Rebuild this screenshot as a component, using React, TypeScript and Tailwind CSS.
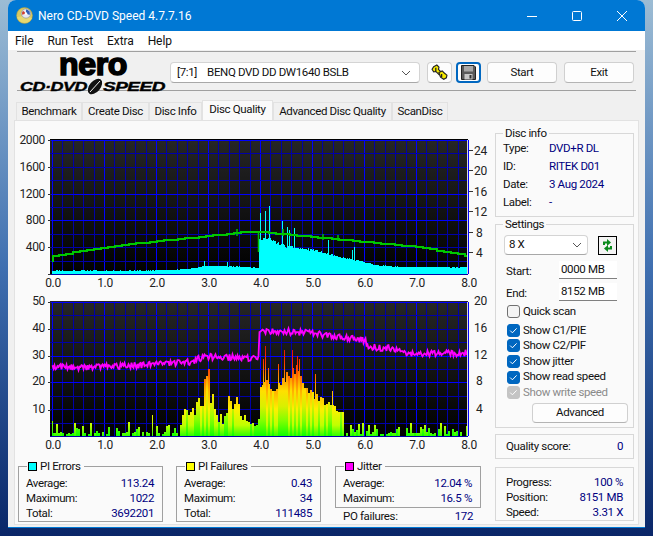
import type { ReactNode } from 'react';

const rng = (seed: number) => () => {
  seed = (seed * 1664525 + 1013904223) % 4294967296;
  return seed / 4294967296;
};

const interp = (pts: number[][], x: number) => {
  if (x <= pts[0][0]) return pts[0][1];
  for (let i = 1; i < pts.length; i++) {
    if (x <= pts[i][0]) {
      const [x0, y0] = pts[i - 1];
      const [x1, y1] = pts[i];
      return y0 + ((y1 - y0) * (x - x0)) / (x1 - x0);
    }
  }
  return pts[pts.length - 1][1];
};

const X0 = 52;
const X1 = 467;
const xAt = (v: number) => X0 + v * 52;

// chart 1 data (screen pixels)
const cyanEnv = [[52, 3.4], [150, 3.4], [180, 4.5], [195, 6], [205, 8], [240, 7.5], [258, 6], [259, 36], [264, 35], [270, 34], [286, 27], [312, 24], [338, 17], [364, 12], [374, 9], [400, 7], [467, 6.5]];
const cyanSpikes: Record<number, number> = { 204: 13, 227: 12, 260: 61, 265: 63, 269: 68, 282: 53, 287: 47, 289: 44, 294: 46, 328: 34, 352: 24, 354: 27 };
const greenEnv = [[52, 256], [104, 247], [156, 241], [208, 236], [245, 232], [260, 232], [312, 237], [364, 242], [416, 247], [467, 256]];

function cyanPath() {
  const r = rng(11);
  let d = '';
  for (let x = X0; x <= X1; x++) {
    const h = cyanSpikes[x] ?? Math.round(interp(cyanEnv, x) * (0.96 + 0.1 * r()));
    d += `M${x + 0.5} 274V${274 - h}`;
  }
  return d;
}

function greenPath() {
  let d = `M${X0 + 0.5} 262V256`;
  for (let x = X0; x <= X1; x += 7) {
    const y = Math.round(interp(greenEnv, x));
    d += `H${x}V${y}`;
  }
  return d + `H${X1}`;
}

// chart 2 data
const magentaEnv = [[52, 367], [104, 367], [156, 364], [192, 362], [200, 358], [208, 357], [245, 358], [258, 358], [259, 332], [270, 331], [312, 333], [338, 337], [364, 340], [369, 347], [400, 349], [403, 354], [467, 353]];
const midEnv = [[179, 8], [182, 23], [185, 37], [190, 25], [197, 50], [203, 60], [205, 75], [209, 69], [214, 39], [218, 25], [224, 22], [228, 47], [233, 47], [237, 37], [243, 29], [248, 19], [258, 20]];
const highEnv = [[260, 59], [265, 62], [272, 52], [278, 55], [284, 62], [290, 68], [296, 72], [302, 55], [310, 48], [320, 40], [330, 35], [340, 28], [343, 26]];
const barSpikes: Record<number, number> = { 52: 15, 152: 21, 263: 77, 265: 90, 268: 68, 278: 72, 284: 86, 292: 86, 297: 80, 299: 77, 315: 62, 332: 45 };

function magentaPath() {
  const r = rng(5);
  let d = '';
  for (let x = X0; x <= X1; x++) {
    const y = interp(magentaEnv, x) + (r() - 0.5) * 6.5;
    d += `${d ? 'L' : 'M'}${x + 0.5} ${y.toFixed(1)}`;
  }
  return d;
}

// bars come in pairs of pixels; tall ones are split over two heat ramps
function barsPaths() {
  const r = rng(23);
  let a1 = '';
  let a2 = '';
  for (let x = X0; x <= X1; x += 2) {
    let h = 0;
    const a = r();
    const b = r();
    if (x >= 260 && x <= 343) h = interp(highEnv, x) * (0.82 + 0.18 * a);
    else if (x >= 179 && x < 260) h = interp(midEnv, x) * (0.5 + 0.5 * a);
    else if (a < 0.2) h = 0;
    else if (a < 0.6) h = 2 + b * 2;
    else h = 4 + b * 10;
    h = Math.round(h);
    const alt = b > 0.5;
    for (const px of [x, x + 1]) {
      const hh = barSpikes[px] ?? h;
      if (hh <= 0) continue;
      const seg = `M${px + 0.5} 436V${436 - hh}`;
      if (alt) a2 += seg;
      else a1 += seg;
    }
  }
  return [a1, a2];
}

const hLines = (top: number) => [0, 1, 2, 3, 4, 5, 6, 7, 8, 9, 10].map((i) => ({ y: top + i * 13.4, major: i === 0 || i === 4 || i === 6 }));
const vLines = Array.from({ length: 41 }, (_, i) => ({ x: X0 + i * 10.4, major: i % 5 === 0 }));

function Grid({ top }: { top: number }) {
  return (
    <g shapeRendering="crispEdges" strokeWidth={1}>
      {vLines.map((l) => (
        <line key={l.x} x1={Math.round(l.x) + 0.5} x2={Math.round(l.x) + 0.5} y1={top} y2={top + 134} stroke={l.major ? '#0000ff' : '#0000a8'} />
      ))}
      {hLines(top).map((l) => (
        <line key={l.y} x1={50} x2={468} y1={Math.round(l.y) + 0.5} y2={Math.round(l.y) + 0.5} stroke={l.major ? '#0000ff' : '#0000a8'} />
      ))}
    </g>
  );
}

function AxisText({ x, y, anchor, children }: { x: number; y: number; anchor: 'start' | 'middle' | 'end'; children: ReactNode }) {
  return (
    <text x={x} y={y + 4.5} textAnchor={anchor} fontSize={12} fill="#222">
      {children}
    </text>
  );
}

const xLabels = ['0.0', '1.0', '2.0', '3.0', '4.0', '5.0', '6.0', '7.0', '8.0'];

function ChartOne() {
  return (
    <svg width={476} height={162} viewBox="15 130 476 162" className="block">
      <defs>
        <linearGradient id="bg1" x1="0" y1="0" x2="0" y2="1">
          <stop offset="0" stopColor="#262626" />
          <stop offset="1" stopColor="#000" />
        </linearGradient>
      </defs>
      <rect x={50} y={139} width={418} height={136} fill="url(#bg1)" />
      <rect x={50} y={139} width={418} height={1} fill="#000" />
      <Grid top={140} />
      <path d={cyanPath()} stroke="#00ffff" shapeRendering="crispEdges" fill="none" />
      <path d={greenPath()} stroke="#00c800" strokeWidth={2} shapeRendering="crispEdges" fill="none" />
      <path d="M258.5 232V252M237 229V236M283 229V236M323 234V240M338 235V241" stroke="#00c000" strokeWidth={1.5} fill="none" />
      <rect x={467} y={140} width={1} height={134} fill="#d8d8d8" />
      {[['2000', 139], ['1600', 166], ['1200', 193], ['800', 219], ['400', 246]].map(([t, y]) => (
        <g key={t}>
          <AxisText x={45} y={+y} anchor="end">{t}</AxisText>
          <line x1={48} x2={51} y1={+y + 1.5} y2={+y + 1.5} stroke="#333" />
        </g>
      ))}
      <line x1={48} x2={51} y1={274.5} y2={274.5} stroke="#333" />
      {[['24', 150], ['20', 170], ['16', 191], ['12', 211], ['8', 232], ['4', 252]].map(([t, y]) => (
        <g key={t}>
          <text x={t === '8' || t === '4' ? 476 : 474} y={+y + 4.5} fontSize={12} fill="#222">{t}</text>
          <line x1={469} x2={473} y1={+y + 0.5} y2={+y + 0.5} stroke="#333" />
        </g>
      ))}
      {xLabels.map((t, i) => (
        <AxisText key={t} x={xAt(i) + 1} y={282} anchor="middle">{t}</AxisText>
      ))}
    </svg>
  );
}

function ChartTwo() {
  const [a1, a2] = barsPaths();
  return (
    <svg width={476} height={163} viewBox="15 292 476 163" className="block">
      <defs>
        <linearGradient id="bg2" x1="0" y1="0" x2="0" y2="1">
          <stop offset="0" stopColor="#262626" />
          <stop offset="1" stopColor="#000" />
        </linearGradient>
        <linearGradient id="heat" gradientUnits="userSpaceOnUse" x1="0" y1="436" x2="0" y2="346">
          <stop offset="0" stopColor="#10ff00" />
          <stop offset="0.17" stopColor="#80ff00" />
          <stop offset="0.33" stopColor="#d8f000" />
          <stop offset="0.5" stopColor="#ffe000" />
          <stop offset="0.64" stopColor="#ff9a00" />
          <stop offset="0.83" stopColor="#ff3000" />
          <stop offset="1" stopColor="#e01000" />
        </linearGradient>
        <linearGradient id="heat2" gradientUnits="userSpaceOnUse" x1="0" y1="436" x2="0" y2="346">
          <stop offset="0" stopColor="#30ff00" />
          <stop offset="0.12" stopColor="#c0ff00" />
          <stop offset="0.3" stopColor="#fff000" />
          <stop offset="0.5" stopColor="#ffb000" />
          <stop offset="0.64" stopColor="#ff7000" />
          <stop offset="0.83" stopColor="#ff2000" />
          <stop offset="1" stopColor="#d01000" />
        </linearGradient>
      </defs>
      <rect x={50} y={301} width={418} height={136} fill="url(#bg2)" />
      <Grid top={302} />
      <path d={a1} stroke="url(#heat)" shapeRendering="crispEdges" fill="none" />
      <path d={a2} stroke="url(#heat2)" shapeRendering="crispEdges" fill="none" />
      <path d={magentaPath()} stroke="#ff00ff" strokeWidth={1.8} fill="none" />
      <rect x={467} y={302} width={1} height={134} fill="#d8d8d8" />
      {[['50', 300], ['40', 327], ['30', 354], ['20', 380], ['10', 408]].map(([t, y]) => (
        <g key={t}>
          <AxisText x={45} y={+y} anchor="end">{t}</AxisText>
          <line x1={48} x2={51} y1={+y + 2.5} y2={+y + 2.5} stroke="#333" />
        </g>
      ))}
      {[['20', 300], ['16', 327], ['12', 354], ['8', 380], ['4', 408]].map(([t, y]) => (
        <text key={t} x={t === '8' || t === '4' ? 476 : 474} y={+y + 4.5} fontSize={12} fill="#222">{t}</text>
      ))}
      {xLabels.map((t, i) => (
        <AxisText key={t} x={xAt(i) + 1} y={444} anchor="middle">{t}</AxisText>
      ))}
    </svg>
  );
}

function NeroLogo() {
  return (
    <svg width={150} height={38} viewBox="14 52 150 38" className="block shrink-0 self-start overflow-visible">
      <text x={56} y={72} fontSize={31} fontWeight={700} fontFamily="Liberation Sans" stroke="#000" strokeWidth={1.6} textLength={68} lengthAdjust="spacingAndGlyphs">nero</text>
      <text x={17} y={88} fontSize={13.5} fontWeight={700} fontStyle="italic" fontFamily="Liberation Sans" stroke="#000" strokeWidth={0.4} textLength={67} lengthAdjust="spacingAndGlyphs">CD·DVD</text>
      <ellipse cx={92} cy={83.5} rx={9} ry={5.5} transform="rotate(-50 92 83.5)" fill="#111" />
      <path d="M87 89L97 78" stroke="#f0f0f0" strokeWidth={1} />
      <text x={100} y={88} fontSize={13.5} fontWeight={700} fontStyle="italic" fontFamily="Liberation Sans" stroke="#000" strokeWidth={0.4} textLength={62} lengthAdjust="spacingAndGlyphs">SPEED</text>
    </svg>
  );
}

function AppIcon() {
  return (
    <svg width={17} height={17} viewBox="0 0 17 17" className="shrink-0">
      <circle cx={8.5} cy={8.5} r={8} fill="#d8c860" stroke="#a89a40" strokeWidth={0.5} />
      <path d="M1 10a8 8 0 0 0 15 1L9 9z" fill="#e6d870" />
      <circle cx={10} cy={6.5} r={4.6} fill="#e8e8f0" stroke="#8090a8" strokeWidth={0.6} />
      <path d="M10 2.5a4 4 0 0 1 3.6 5.5L10 6.5z" fill="#2f5fb8" />
      <path d="M10 6.5L7 3.8a4 4 0 0 0-.8 4z" fill="#d04030" />
      <circle cx={10} cy={6.5} r={1.2} fill="#fff" />
    </svg>
  );
}

function KeysIcon() {
  return (
    <svg width={19} height={18} viewBox="0 0 17 17">
      <g fill="#f4e800" stroke="#222" strokeWidth={1.1}>
        <path d="M3 2.5l3-1.5 2 2-.5 2 3 3-2.5 2-3-3-2 .5-1.5-2.5z" />
        <path d="M8 8l3-1.5 2 2 2.5 2-.5 2.5-2.5 1.5-3-2-1-2.5z" />
      </g>
      <path d="M5 3.5v3M10.5 9.5v3" stroke="#222" strokeWidth={1.2} />
    </svg>
  );
}

function FloppyIcon() {
  return (
    <svg width={15} height={15} viewBox="0 0 15 15">
      <path d="M0.5 0.5H13L14.5 2V14.5H0.5z" fill="#5a5a5a" stroke="#222" />
      <rect x={3} y={1} width={9} height={5.5} fill="#a8a8a8" />
      <rect x={3.5} y={9} width={8} height={5.5} fill="#c8c8c8" />
      <rect x={8.5} y={10} width={2} height={3.5} fill="#333" />
    </svg>
  );
}

function RefreshIcon() {
  return (
    <svg width={13} height={15} viewBox="0 0 13 15">
      <path d="M3 7V4.5H6.5" stroke="#0a8a1c" strokeWidth={2} fill="none" />
      <path d="M6 1l4 3.5L6 8z" fill="#0a8a1c" />
      <path d="M10 8v2.5H6.5" stroke="#0a8a1c" strokeWidth={2} fill="none" />
      <path d="M7 7l-4 3.5L7 14z" fill="#0a8a1c" />
    </svg>
  );
}

function Chevron() {
  return (
    <svg width={10} height={6} viewBox="0 0 10 6" className="shrink-0">
      <path d="M1 1l4 4 4-4" stroke="#555" strokeWidth={1} fill="none" />
    </svg>
  );
}

function Check({ label, state }: { label: string; state: 'on' | 'off' | 'disabled' }) {
  return (
    <div className="flex h-[15.6px] items-center pl-[11px]">
      <span
        className={`flex h-[13px] w-[13px] shrink-0 items-center justify-center rounded-[3px] border ${
          state === 'on' ? 'border-[#0067c0] bg-[#0067c0]' : state === 'disabled' ? 'border-[#c4c4c4] bg-[#c4c4c4]' : 'border-[#707070] bg-[#f4f4f4]'
        }`}
      >
        {state !== 'off' && (
          <svg width={9} height={9} viewBox="0 0 9 9">
            <path d="M1.2 4.6l2.2 2.2 4.2-4.4" stroke="#fff" strokeWidth={1} fill="none" />
          </svg>
        )}
      </span>
      <span className={`ml-[3px] ${state === 'disabled' ? 'text-[#8a8a8a]' : ''}`}>{label}</span>
    </div>
  );
}

function Row({ label, value, className = '' }: { label: string; value: string; className?: string }) {
  return (
    <div className={`flex items-center justify-between ${className}`}>
      <span>{label}</span>
      <span className="text-[#000080]">{value}</span>
    </div>
  );
}

function InfoRow({ label, value }: { label: string; value: string }) {
  return (
    <div className="flex h-[17.8px] items-center">
      <span className="w-[46px]">{label}</span>
      <span className="text-[#000080]">{value}</span>
    </div>
  );
}

function StatBox({ title, swatch, className, children }: { title: string; swatch: string; className: string; children: ReactNode }) {
  return (
    <div className={`relative border border-[#a0a0a0] pl-[7px] pr-[8px] pt-[9px] ${className}`}>
      <div className="absolute -top-[8px] left-[8px] flex h-[15px] items-center bg-[#fafafa] pl-[1px] pr-[3px]">
        <span className={`mr-[3px] h-[9px] w-[9px] border border-black ${swatch}`} />
        {title}
      </div>
      {children}
    </div>
  );
}

function Button({ children, className }: { children: ReactNode; className: string }) {
  return (
    <div className={`flex items-center justify-center rounded-[4px] border border-[#d0d0d0] border-b-[#b4b4b4] bg-[#fdfdfd] ${className}`}>
      {children}
    </div>
  );
}

const tabs = [
  { name: 'Benchmark', w: 'w-[66px]' },
  { name: 'Create Disc', w: 'w-[67px]' },
  { name: 'Disc Info', w: 'w-[53px]' },
  { name: 'Disc Quality', w: 'w-[71px]', active: true },
  { name: 'Advanced Disc Quality', w: 'w-[119px]' },
  { name: 'ScanDisc', w: 'w-[56px]' },
];

export default function App() {
  return (
    <div className="relative h-[536px] w-[653px] overflow-hidden bg-gradient-to-b from-[#9cbcd4] via-[#3f6fb0] to-[#0a2668] font-['Roboto','Liberation_Sans',sans-serif] text-[11.5px] leading-none tracking-[-0.35px] text-[#111]">
      <div className="ml-2 flex h-[528px] w-[637px] flex-col overflow-hidden rounded-t-[8px] border-b border-[#0078d4] bg-[#f0f0f0]">
        {/* title bar */}
        <div className="flex h-[31px] shrink-0 items-center bg-[#0078d4] tracking-normal text-white">
          <div className="ml-2 flex items-center gap-[5px] text-[12px]">
            <AppIcon />
            <span>Nero CD-DVD Speed 4.7.7.16</span>
          </div>
          <div className="ml-auto mr-[18px] flex items-center gap-[35px]">
            <svg width={10} height={10} viewBox="0 0 10 10"><path d="M0 5.5H10" stroke="#fff" /></svg>
            <svg width={10} height={10} viewBox="0 0 10 10"><rect x={0.5} y={0.5} width={9} height={9} rx={1} stroke="#fff" fill="none" /></svg>
            <svg width={10} height={10} viewBox="0 0 10 10"><path d="M0 0L10 10M10 0L0 10" stroke="#fff" /></svg>
          </div>
        </div>
        {/* menu */}
        <div className="flex h-[19px] shrink-0 items-center gap-[14px] bg-white pl-[7px] text-[12px] tracking-[-0.1px]">
          <span>File</span>
          <span>Run Test</span>
          <span>Extra</span>
          <span>Help</span>
        </div>
        {/* toolbar */}
        <div className="mx-[9px] mt-[1px] flex h-[40px] shrink-0 items-center border-y border-[#a0a0a0] pt-[3px]">
          <NeroLogo />
          <div className="ml-[3px] flex h-[21px] w-[250px] items-center justify-between rounded-[4px] border border-[#d4d4d4] border-b-[#a8a8a8] bg-white pl-[6px] pr-[8px]">
            <span>[7:1]&nbsp;&nbsp;&nbsp;&nbsp;BENQ DVD DD DW1640 BSLB</span>
            <Chevron />
          </div>
          <Button className="ml-[7px] h-[21px] w-[25px]"><KeysIcon /></Button>
          <div className="ml-[4px] flex h-[21px] w-[25px] items-center justify-center rounded-[4px] border-2 border-[#0067c0] bg-[#fdfdfd]"><FloppyIcon /></div>
          <Button className="ml-[6px] h-[21px] w-[70px]">Start</Button>
          <Button className="ml-[7px] h-[21px] w-[70px]">Exit</Button>
        </div>
        {/* tabs */}
        <div className="ml-[8px] mt-[9px] flex h-[20px] shrink-0 items-end">
          {tabs.map((t) => (
            <div
              key={t.name}
              className={`flex items-center justify-center whitespace-nowrap border border-b-0 border-[#e2e2e2] ${t.w} ${t.active ? 'h-[20px] bg-[#fafafa] pb-[2px]' : 'h-[18px] bg-[#f0f0f0]'}`}
            >
              {t.name}
            </div>
          ))}
        </div>
        {/* panel */}
        <div className="mx-[6px] flex h-[405px] shrink-0 border border-[#e2e2e2] bg-[#fafafa]">
          <div className="w-[476px] shrink-0 pt-[9px]">
            <ChartOne />
            <ChartTwo />
            <div className="ml-[3px] mt-[11px] flex items-start">
              <StatBox title="PI Errors" swatch="bg-[#00ffff]" className="h-[56px] w-[145px]">
                <Row label="Average:" value="113.24" className="h-[15px]" />
                <Row label="Maximum:" value="1022" className="h-[15px]" />
                <Row label="Total:" value="3692201" className="h-[15px]" />
              </StatBox>
              <StatBox title="PI Failures" swatch="bg-[#ffff00]" className="ml-[13px] h-[56px] w-[145px]">
                <Row label="Average:" value="0.43" className="h-[15px]" />
                <Row label="Maximum:" value="34" className="h-[15px]" />
                <Row label="Total:" value="111485" className="h-[15px]" />
              </StatBox>
              <div className="ml-[14px] w-[146px]">
                <StatBox title="Jitter" swatch="bg-[#ff00ff]" className="h-[42px]">
                  <Row label="Average:" value="12.04 %" className="h-[15px]" />
                  <Row label="Maximum:" value="16.5 %" className="h-[15px]" />
                </StatBox>
                <Row label="PO failures:" value="172" className="mt-[1px] h-[15px] px-[8px]" />
              </div>
            </div>
          </div>
          <div className="ml-[4px] mt-[12px] w-[139px] shrink-0">
            <div className="relative h-[84px] border border-[#d8d8d8] pl-[7px] pt-[6px]">
              <span className="absolute -top-[6px] left-[7px] bg-[#fafafa] px-[2px]">Disc info</span>
              <InfoRow label="Type:" value="DVD+R DL" />
              <InfoRow label="ID:" value="RITEK D01" />
              <InfoRow label="Date:" value="3 Aug 2024" />
              <InfoRow label="Label:" value="-" />
            </div>
            <div className="relative mt-[7px] h-[204px] border border-[#d8d8d8] pt-[10px]">
              <span className="absolute -top-[6px] left-[7px] bg-[#fafafa] px-[2px]">Settings</span>
              <div className="ml-[8px] flex items-center">
                <div className="flex h-[20px] w-[84px] items-center justify-between rounded-[4px] border border-[#d4d4d4] border-b-[#a8a8a8] bg-white pl-[4px] pr-[5px]">
                  <span>8 X</span>
                  <Chevron />
                </div>
                <div className="ml-[10px] flex h-[19px] w-[19px] items-center justify-center border border-black bg-[#f4f4f4]">
                  <RefreshIcon />
                </div>
              </div>
              <div className="mt-[6px] flex h-[18px] items-center pl-[10px]">
                <span className="mt-[3px] w-[53px]">Start:</span>
                <span className="flex h-[18px] w-[58px] items-center border-b border-[#808080] bg-white pl-[2px]">0000 MB</span>
              </div>
              <div className="mt-[4px] flex h-[18px] items-center pl-[10px]">
                <span className="mt-[3px] w-[53px]">End:</span>
                <span className="flex h-[18px] w-[58px] items-center border-b border-[#808080] bg-white pl-[2px]">8152 MB</span>
              </div>
              <div className="mt-[3px]">
                <Check label="Quick scan" state="off" />
              </div>
              <div className="mt-[3px]">
                <Check label="Show C1/PIE" state="on" />
                <Check label="Show C2/PIF" state="on" />
                <Check label="Show jitter" state="on" />
                <Check label="Show read speed" state="on" />
                <Check label="Show write speed" state="disabled" />
              </div>
              <Button className="ml-[36px] mt-[2px] h-[20px] w-[96px]">Advanced</Button>
            </div>
            <div className="mt-[6px] flex h-[25px] items-center justify-between border border-[#d8d8d8] pl-[10px] pr-[10px]">
              <span>Quality score:</span>
              <span className="text-[#000080]">0</span>
            </div>
            <div className="mt-[8px] h-[54px] border border-[#d8d8d8] px-[10px] pt-[7px]">
              <Row label="Progress:" value="100 %" className="h-[15px]" />
              <Row label="Position:" value="8151 MB" className="h-[15px]" />
              <Row label="Speed:" value="3.31 X" className="h-[15px]" />
            </div>
          </div>
        </div>
      </div>
    </div>
  );
}
